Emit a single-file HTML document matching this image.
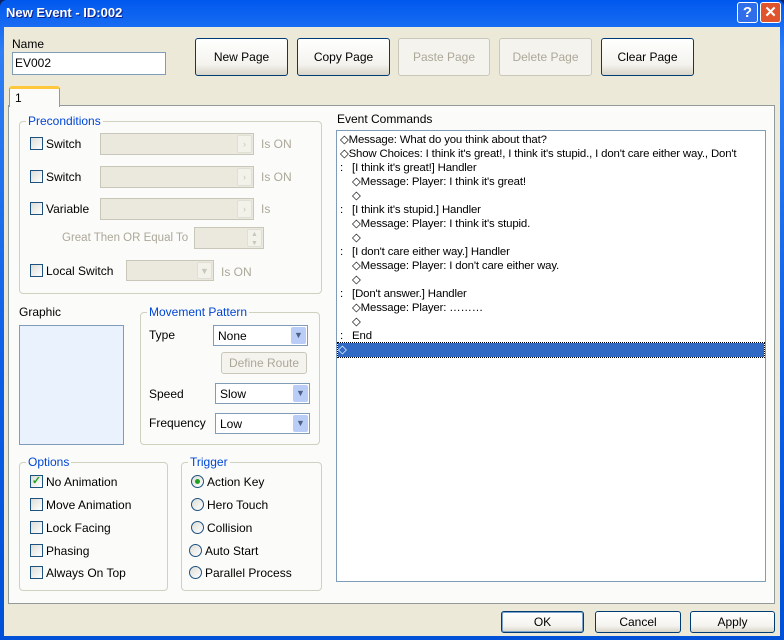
<!DOCTYPE html><html><head><style>
*{margin:0;padding:0;box-sizing:border-box}
body{width:784px;height:640px;background:#0a246a;font-family:"Liberation Sans",sans-serif;font-size:12px;color:#000;position:relative;overflow:hidden}
.a{position:absolute}
#win{left:0;top:0;width:784px;height:640px;background:linear-gradient(#0058ee,#2f7ef5 8%,#0a5ee6 60%,#0050d8);border-radius:7px 7px 0 0}
#body{left:4px;top:27px;width:776px;height:609px;background:#ece9d8}
.btn{position:absolute;border:1px solid #003c74;border-radius:3px;background:linear-gradient(#fff,#f4f3ee 70%,#d8d5c8);text-align:center;font-size:12px}
.dis{border-color:#c9c7ba;color:#aca899;background:#f4f3ee}
.grp{position:absolute;border:1px solid #d0d0bf;border-radius:4px}
.gl{position:absolute;top:-8px;left:6px;background:#fbfbf9;padding:0 2px;color:#0046d5}
.cb{position:absolute;width:13px;height:13px;border:1px solid #1c5180;background:linear-gradient(135deg,#dcdcd7,#fff)}
.rb{position:absolute;width:13px;height:13px;border:1px solid #1c5180;border-radius:50%;background:linear-gradient(135deg,#dcdcd7,#fff)}
.dd{position:absolute;border:1px solid #7f9db9;background:#fff;padding:3px 4px}
.dd i,.dx i{position:absolute;right:1px;top:1px;bottom:1px;width:15px;background:#b9cdf6;border-radius:2px;color:#4d6185;font-style:normal;font-size:9px;text-align:center;line-height:17px}
.dx i{background:#f2f1ea;color:#c9c7ba;border:1px solid #e0dfd5}
.dx{position:absolute;border:1px solid #c9c7ba;background:#ebe9de}
.gr{color:#aca899}
.row{position:absolute;left:3px;white-space:pre;height:14px;line-height:14px;font-size:11.4px;letter-spacing:-0.15px}
</style></head><body>
<div class="a" id="win"></div>
<div class="a" style="left:6px;top:5px;color:#fff;font-weight:bold;font-size:13px;text-shadow:1px 1px #0a1e8c">New Event - ID:002</div>
<div class="a" style="left:737px;top:2px;width:21px;height:21px;border:1px solid #fff;border-radius:3px;background:#2f6ee8;color:#fff;font-weight:bold;text-align:center;font-size:15px;line-height:19px">?</div>
<div class="a" style="left:760px;top:2px;width:21px;height:21px;border:1px solid #fff;border-radius:3px;background:#e0542d;color:#fff;font-weight:bold;text-align:center;font-size:15px;line-height:19px">✕</div>
<div class="a" id="body"></div>
<div class="a" style="left:12px;top:37px">Name</div>
<div class="a" style="left:12px;top:52px;width:154px;height:23px;border:1px solid #7f9db9;background:#fff;padding:3px 2px">EV002</div>
<div class="btn" style="left:195px;top:38px;width:93px;height:38px;line-height:36px">New Page</div>
<div class="btn" style="left:297px;top:38px;width:93px;height:38px;line-height:36px">Copy Page</div>
<div class="btn dis" style="left:398px;top:38px;width:92px;height:38px;line-height:36px">Paste Page</div>
<div class="btn dis" style="left:499px;top:38px;width:93px;height:38px;line-height:36px">Delete Page</div>
<div class="btn" style="left:601px;top:38px;width:93px;height:38px;line-height:36px">Clear Page</div>
<div class="a" style="left:8px;top:105px;width:767px;height:499px;border:1px solid #919b9c;background:#fbfbf9"></div>
<div class="a" style="left:9px;top:86px;width:51px;height:21px;border:1px solid #919b9c;border-top:3px solid #ffc83c;border-bottom:none;background:#fbfbf9;border-radius:3px 3px 0 0;padding:2px 5px">1</div>
<div class="grp" style="left:19px;top:121px;width:303px;height:173px"><span class="gl">Preconditions</span></div>
<div class="cb" style="left:30px;top:137px"></div><div class="a" style="left:46px;top:137px">Switch</div>
<div class="dx" style="left:100px;top:133px;width:154px;height:22px"><i>›</i></div><div class="a gr" style="left:261px;top:137px">Is ON</div>
<div class="cb" style="left:30px;top:170px"></div><div class="a" style="left:46px;top:170px">Switch</div>
<div class="dx" style="left:100px;top:166px;width:154px;height:22px"><i>›</i></div><div class="a gr" style="left:261px;top:170px">Is ON</div>
<div class="cb" style="left:30px;top:202px"></div><div class="a" style="left:46px;top:202px">Variable</div>
<div class="dx" style="left:100px;top:198px;width:154px;height:22px"><i>›</i></div><div class="a gr" style="left:261px;top:202px">Is</div>
<div class="a gr" style="left:62px;top:232px;font-size:11.5px">Great Then OR Equal To</div>
<div class="dx" style="left:194px;top:227px;width:70px;height:22px"><i style="font-size:7px;line-height:9px">▲<br>▼</i></div>
<div class="cb" style="left:30px;top:264px"></div><div class="a" style="left:46px;top:264px">Local Switch</div>
<div class="dx" style="left:126px;top:260px;width:88px;height:21px"><i>▼</i></div><div class="a gr" style="left:221px;top:265px">Is ON</div>
<div class="a" style="left:19px;top:305px">Graphic</div>
<div class="a" style="left:19px;top:325px;width:105px;height:120px;border:1px solid #7f9db9;background:#eaf2fd"></div>
<div class="grp" style="left:140px;top:312px;width:180px;height:133px"><span class="gl">Movement Pattern</span></div>
<div class="a" style="left:149px;top:328px">Type</div>
<div class="dd" style="left:213px;top:325px;width:95px;height:21px">None<i>▼</i></div>
<div class="btn dis" style="left:221px;top:352px;width:86px;height:22px;line-height:20px">Define Route</div>
<div class="a" style="left:149px;top:387px">Speed</div>
<div class="dd" style="left:215px;top:383px;width:95px;height:21px">Slow<i>▼</i></div>
<div class="a" style="left:149px;top:416px">Frequency</div>
<div class="dd" style="left:215px;top:413px;width:95px;height:21px">Low<i>▼</i></div>
<div class="grp" style="left:19px;top:462px;width:149px;height:129px"><span class="gl">Options</span></div>
<div class="cb" style="left:30px;top:475px;color:#21a121;font-size:11px;line-height:11px;text-align:center;font-weight:bold">✓</div><div class="a" style="left:46px;top:475px">No Animation</div>
<div class="cb" style="left:30px;top:498px"></div><div class="a" style="left:46px;top:498px">Move Animation</div>
<div class="cb" style="left:30px;top:521px"></div><div class="a" style="left:46px;top:521px">Lock Facing</div>
<div class="cb" style="left:30px;top:544px"></div><div class="a" style="left:46px;top:544px">Phasing</div>
<div class="cb" style="left:30px;top:566px"></div><div class="a" style="left:46px;top:566px">Always On Top</div>
<div class="grp" style="left:181px;top:462px;width:141px;height:129px"><span class="gl">Trigger</span></div>
<div class="rb" style="left:191px;top:475px"><div class="a" style="left:3px;top:3px;width:5px;height:5px;border-radius:50%;background:#21a121"></div></div><div class="a" style="left:207px;top:475px">Action Key</div>
<div class="rb" style="left:191px;top:498px"></div><div class="a" style="left:207px;top:498px">Hero Touch</div>
<div class="rb" style="left:191px;top:521px"></div><div class="a" style="left:207px;top:521px">Collision</div>
<div class="rb" style="left:189px;top:544px"></div><div class="a" style="left:205px;top:544px">Auto Start</div>
<div class="rb" style="left:189px;top:566px"></div><div class="a" style="left:205px;top:566px">Parallel Process</div>
<div class="a" style="left:337px;top:112px">Event Commands</div>
<div class="a" style="left:336px;top:130px;width:430px;height:452px;border:1px solid #7f9db9;background:#fff;overflow:hidden">
<div class="row" style="top:2px">◇Message: What do you think about that?</div>
<div class="row" style="top:16px">◇Show Choices: I think it's great!, I think it's stupid., I don't care either way., Don't</div>
<div class="row" style="top:30px">:   [I think it's great!] Handler</div>
<div class="row" style="top:44px">    ◇Message: Player: I think it's great!</div>
<div class="row" style="top:58px">    ◇</div>
<div class="row" style="top:72px">:   [I think it's stupid.] Handler</div>
<div class="row" style="top:86px">    ◇Message: Player: I think it's stupid.</div>
<div class="row" style="top:100px">    ◇</div>
<div class="row" style="top:114px">:   [I don't care either way.] Handler</div>
<div class="row" style="top:128px">    ◇Message: Player: I don't care either way.</div>
<div class="row" style="top:142px">    ◇</div>
<div class="row" style="top:156px">:   [Don't answer.] Handler</div>
<div class="row" style="top:170px">    ◇Message: Player: ………</div>
<div class="row" style="top:184px">    ◇</div>
<div class="row" style="top:198px">:   End</div>
<div class="row" style="top:212px;left:1px;width:426px;background:#316ac5;color:#fff;outline:1px dotted #000">◇</div>
</div>
<div class="btn" style="left:501px;top:611px;width:83px;height:22px;line-height:20px;border-color:#003c74;box-shadow:inset 0 0 0 1px #7da2ce">OK</div>
<div class="btn" style="left:595px;top:611px;width:86px;height:22px;line-height:20px">Cancel</div>
<div class="btn" style="left:690px;top:611px;width:85px;height:22px;line-height:20px">Apply</div>
</body></html>
